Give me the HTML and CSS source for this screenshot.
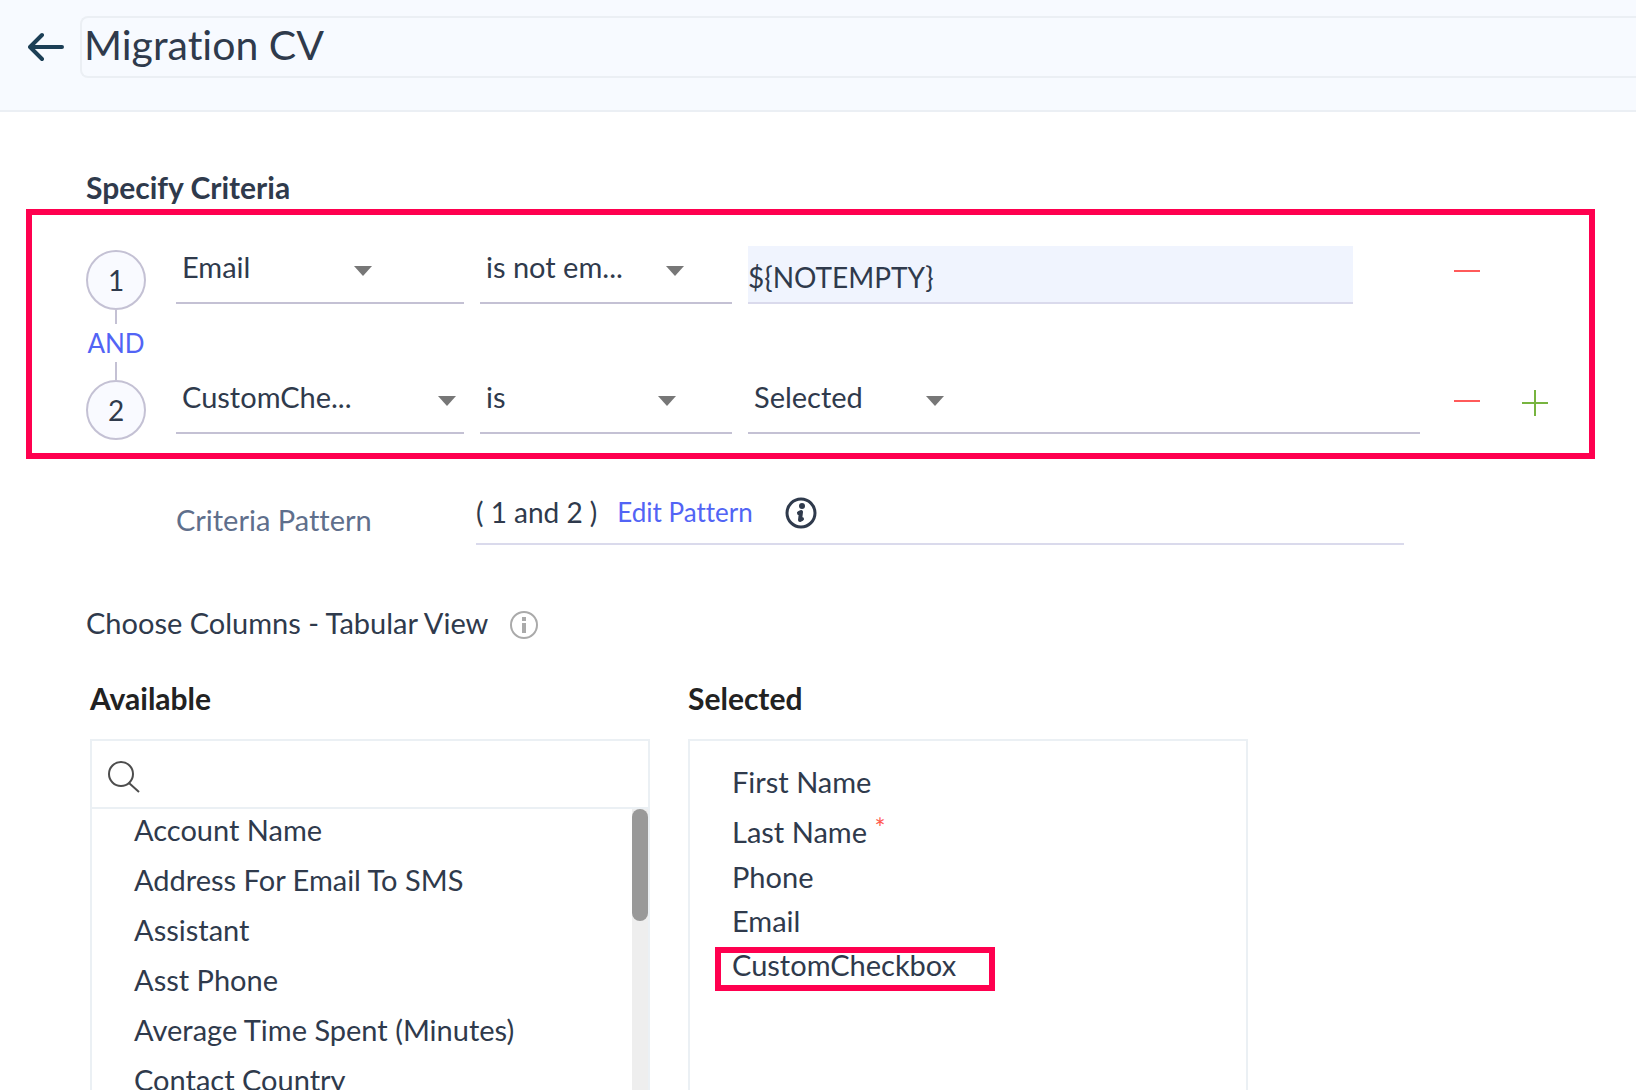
FILE: index.html
```html
<!DOCTYPE html>
<html lang="en">
<head>
    <meta charset="UTF-8">
    <meta name="viewport" content="width=device-width, initial-scale=1.0">
    <title>Migration CV</title>
    <link rel="stylesheet" href="styles.css">
</head>
<body>
    <header class="page-header">
        <button class="back-btn" type="button" aria-label="Back">
            <svg width="36" height="30" viewBox="0 0 36 30" fill="none" stroke="#1c3f56" stroke-width="4" stroke-linecap="round" stroke-linejoin="round">
                <path d="M34 15H3M14 3L2 15l12 12"/>
            </svg>
        </button>
        <input class="view-name" type="text" value="Migration CV" aria-label="View name">
    </header>

    <main class="content">
        <h2 class="section-title">Specify Criteria</h2>

        <div class="criteria-box">
            <div class="criteria-row">
                <span class="step">1</span>
                <div class="field field-name">
                    <select aria-label="Field 1"><option>Email</option></select>
                </div>
                <div class="field field-operator">
                    <select class="select-medium" aria-label="Condition 1"><option>is not em...</option></select>
                </div>
                <div class="field-value">
                    <input class="value-input" type="text" value="${NOTEMPTY}" aria-label="Value 1">
                </div>
                <button class="icon-btn" type="button" aria-label="Remove criteria 1">
                    <svg width="26" height="42"><path d="M0 21h26" stroke="#ff5a5a" stroke-width="2"/></svg>
                </button>
            </div>
            <div class="connector">
                <button class="and-btn" type="button">AND</button>
            </div>
            <div class="criteria-row">
                <span class="step">2</span>
                <div class="field field-name">
                    <select class="select-wide" aria-label="Field 2"><option>CustomChe...</option></select>
                </div>
                <div class="field field-operator">
                    <select aria-label="Condition 2"><option>is</option></select>
                </div>
                <div class="field field-value">
                    <select aria-label="Value 2"><option>Selected</option></select>
                </div>
                <button class="icon-btn" type="button" aria-label="Remove criteria 2">
                    <svg width="26" height="42"><path d="M0 21h26" stroke="#ff5a5a" stroke-width="2"/></svg>
                </button>
                <button class="icon-btn add-btn" type="button" aria-label="Add criteria">
                    <svg width="26" height="42"><path d="M0 23h26M13 10v26" stroke="#77b43f" stroke-width="2"/></svg>
                </button>
            </div>
        </div>

        <div class="pattern-row">
            <span class="pattern-label">Criteria Pattern</span>
            <div class="pattern-value">
                <span class="pattern-text">( 1 and 2 )</span>
                <a class="edit-link" href="#">Edit Pattern</a>
                <svg width="32" height="34" viewBox="0 -2 32 34" fill="none" stroke="#2f3a4c" stroke-width="3" stroke-linecap="round" stroke-linejoin="round">
                    <circle cx="16" cy="16" r="14"/>
                    <circle cx="17" cy="9" r="3" fill="#2f3a4c" stroke="none"/>
                    <path d="M14 16l2-1-1 8 2-1" stroke-width="4"/>
                </svg>
            </div>
        </div>

        <h3 class="columns-title">
            Choose Columns - Tabular View
            <svg width="28" height="32" viewBox="0 -4 28 32">
                <circle cx="14" cy="14" r="13" fill="none" stroke="#aaa" stroke-width="2"/>
                <path d="M12 6h4v4h-4zM12 12h4v10h-4z" fill="#aaa"/>
            </svg>
        </h3>

        <div class="columns">
            <section class="column">
                <h4>Available</h4>
                <div class="panel">
                    <label class="search">
                        <svg width="34" height="34" viewBox="0 0 34 34" fill="none" stroke="#4d4d4d" stroke-width="2">
                            <circle cx="14" cy="14" r="12"/>
                            <path d="M22 23l10 9"/>
                        </svg>
                        <input type="text" aria-label="Search columns">
                    </label>
                    <div class="list-wrap">
                        <ul class="available-list">
                            <li>Account Name</li>
                            <li>Address For Email To SMS</li>
                            <li>Assistant</li>
                            <li>Asst Phone</li>
                            <li>Average Time Spent (Minutes)</li>
                            <li>Contact Country</li>
                        </ul>
                        <div class="scroll-track"><div class="scroll-thumb"></div></div>
                    </div>
                </div>
            </section>
            <section class="column">
                <h4>Selected</h4>
                <div class="panel">
                    <ul class="selected-list">
                        <li>First Name</li>
                        <li>Last Name <span class="required">*</span></li>
                        <li>Phone</li>
                        <li>Email</li>
                        <li><span class="highlight">CustomCheckbox</span></li>
                    </ul>
                </div>
            </section>
        </div>
    </main>
</body>
</html>
```
FILE: styles.css
```css
* {
    box-sizing: border-box;
}

body {
    font-family: Lato, "Liberation Sans", sans-serif;
    font-size: 29px;
    font-variant-ligatures: none;
    line-height: 42px;
    color: #2f3a4c;
    background-color: #fff;
    height: 100vh;
    margin: 0;
    display: flex;
    flex-direction: column;
    overflow: hidden;
}

button,
input,
select {
    font: inherit;
    color: inherit;
    background: none;
    border: none;
    border-radius: 0;
    padding: 0;
    margin: 0;
    outline: none;
}

button {
    cursor: pointer;
}

svg {
    display: block;
    flex: none;
}

h2,
h3,
h4,
ul {
    margin: 0;
    padding: 0;
}

ul {
    list-style: none;
}

/* Header */
.page-header {
    display: flex;
    align-items: center;
    flex: none;
    padding: 16px 0 32px 28px;
    background-color: #f7faff;
    border-bottom: 2px solid #ebeff4;
}

.back-btn {
    margin-right: 16px;
}

.view-name {
    flex: 1;
    min-width: 0;
    height: 62px;
    padding: 0 2px 6px;
    font-size: 41px;
    border: 2px solid #ebeff4;
    border-right: none;
    border-radius: 8px 0 0 8px;
}

/* Criteria */
.content {
    display: flex;
    flex-direction: column;
    flex: 1;
    min-height: 0;
    padding-top: 54px;
}

.section-title {
    margin-left: 86px;
    font-size: 30px;
    font-weight: 700;
}

.criteria-box {
    margin: 1px 41px 0 26px;
    padding: 35px 41px 13px 54px;
    border: 6px solid #ff004f;
}

.criteria-row {
    display: flex;
    align-items: flex-start;
    height: 60px;
}

.step {
    flex: none;
    width: 60px;
    height: 60px;
    margin-right: 30px;
    font-size: 28px;
    line-height: 56px;
    text-align: center;
    background-color: #f9faff;
    border: 2px solid #c4c1d4;
    border-radius: 50%;
}

.field {
    height: 54px;
    border-bottom: 2px solid #c4c1d4;
}

.field-name {
    flex: none;
    width: 288px;
    margin-right: 16px;
}

.field-operator {
    flex: none;
    width: 252px;
    margin-right: 16px;
}

.field-value {
    flex: 1;
    margin-right: 34px;
}

select {
    display: block;
    appearance: none;
    width: 196px;
    height: 34px;
    padding: 0 24px 0 6px;
    line-height: 34px;
    background: url("data:image/svg+xml,%3Csvg xmlns='http://www.w3.org/2000/svg' width='18' height='10'%3E%3Cpath d='M0 0h18l-9 10z' fill='%23777'/%3E%3C/svg%3E") no-repeat right 16px;
}

.select-medium {
    width: 204px;
}

.select-wide {
    width: 280px;
}

.value-input {
    display: block;
    width: 90%;
    height: 58px;
    margin-top: -4px;
    padding-top: 6px;
    font-size: 28px;
    background-color: #f0f4fe;
    border-bottom: 2px solid #dadaec;
}

.icon-btn {
    flex: none;
    width: 26px;
    height: 42px;
    margin-right: 68px;
}

.icon-btn:not(:last-child) {
    margin-right: 42px;
}

.icon-btn.add-btn {
    margin-right: 0;
}

.connector {
    display: flex;
    flex-direction: column;
    align-items: center;
    width: 60px;
}

.connector::before,
.connector::after {
    content: "";
    width: 2px;
    height: 14px;
    background-color: #c4c1d4;
}

.connector::after {
    height: 18px;
}

.and-btn,
.edit-link {
    font-size: 26px;
    line-height: 38px;
    color: #5264f5;
    text-decoration: none;
}

.pattern-row {
    display: flex;
    margin: 32px 232px 0 176px;
}

.pattern-label {
    flex: none;
    width: 300px;
    padding-top: 8px;
    color: #5f6f8c;
}

.pattern-value {
    display: flex;
    align-items: center;
    flex: 1;
    padding-bottom: 10px;
    border-bottom: 2px solid #dadaec;
}

.pattern-text {
    margin-right: 20px;
    font-size: 28px;
}

.edit-link {
    margin-right: 32px;
}

/* Columns */
.columns-title {
    display: flex;
    align-items: center;
    gap: 22px;
    margin: 57px 0 33px 86px;
    font-size: 29px;
    font-weight: 400;
}

.columns {
    display: grid;
    grid-template-columns: repeat(2, minmax(0, 560px));
    gap: 38px;
    flex: 1;
    min-height: 0;
    padding: 0 90px;
}

.column {
    display: flex;
    flex-direction: column;
    min-height: 0;
}

.column h4 {
    margin-bottom: 20px;
    font-size: 30px;
    font-weight: 700;
    color: #222;
}

.panel {
    display: flex;
    flex-direction: column;
    flex: 1;
    min-height: 0;
    border: 2px solid #ebf0f4;
    border-bottom: none;
}

.search {
    display: flex;
    align-items: center;
    gap: 12px;
    flex: none;
    height: 68px;
    padding: 6px 15px 0;
    border-bottom: 2px solid #ebf0f4;
}

.search input {
    flex: 1;
    min-width: 0;
}

.list-wrap {
    display: flex;
    flex: 1;
    min-height: 0;
}

.available-list {
    flex: 1;
    padding-left: 42px;
    overflow: hidden;
}

.available-list li {
    margin-bottom: 8px;
}

.scroll-track {
    width: 16px;
    background-color: #eee;
}

.scroll-thumb {
    height: 112px;
    background-color: #999;
    border-radius: 8px;
}

.selected-list {
    padding: 16px 42px;
}

.selected-list li {
    height: 44px;
    line-height: 44px;
}

.selected-list li:first-child {
    height: 50px;
    line-height: 50px;
}

.selected-list li:nth-child(2) {
    height: 48px;
    line-height: 50px;
}

.required {
    font-size: 26px;
    line-height: 42px;
    vertical-align: top;
    color: #ff5a50;
}

/* border sits around the text, over the list */
.highlight {
    position: relative;
}

.highlight::after {
    content: "";
    position: absolute;
    top: 0;
    bottom: -9px;
    left: -17px;
    width: 268px;
    border: 6px solid #ff004f;
}
```
